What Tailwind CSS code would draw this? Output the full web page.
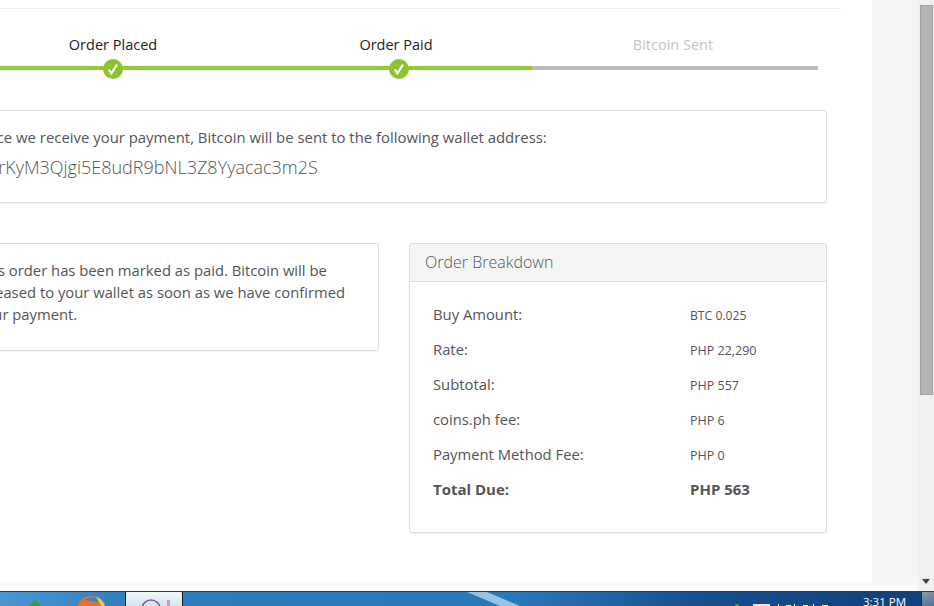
<!DOCTYPE html>
<html><head><meta charset="utf-8"><script src="https://cdn.jsdelivr.net/npm/@tailwindcss/browser@4"></script></head>
<body class="m-0 overflow-hidden">
<div class="w-[934px] h-[606px] flex flex-col overflow-hidden font-['Open_Sans',sans-serif] text-[#555] bg-[#f8f9fb]">
  <div class="h-[591px] flex shrink-0 overflow-hidden">
    <div class="w-[872px] h-[583px] shrink-0 bg-white overflow-hidden">
      <div class="w-[881px] -ml-[39px] h-[583px]">
        <div class="h-[9px] w-[881px] border-b border-[#eeeeee]"></div>
        <div class="relative h-[101px] w-[866px]">
          <div class="absolute left-0 top-[57px] h-[4px] w-[571px] bg-[#94cc2e]"></div>
          <div class="absolute left-[571px] top-[57px] h-[4px] w-[286px] bg-[#bbbbbb]"></div>
          <div class="absolute left-[72px] top-[26px] w-[160px] text-center text-[14.5px] leading-[20px] text-[#222]">Order Placed</div>
          <div class="absolute left-[355px] top-[26px] w-[160px] text-center text-[14.5px] leading-[20px] text-[#222]">Order Paid</div>
          <div class="absolute left-[632px] top-[26px] w-[160px] text-center text-[14.5px] leading-[20px] text-[#c4c4c4]">Bitcoin Sent</div>
          <div class="absolute left-[142px] top-[50px] w-[20px] h-[20px] rounded-full bg-[#8cc332]"><svg width="20" height="20" viewBox="0 0 20 20" fill="none"><path d="M5.8 10.5 L8.4 14.4 L14 5.6" stroke="#fff" stroke-width="2"/></svg></div>
          <div class="absolute left-[428px] top-[50px] w-[20px] h-[20px] rounded-full bg-[#8cc332]"><svg width="20" height="20" viewBox="0 0 20 20" fill="none"><path d="M5.8 10.5 L8.4 14.4 L14 5.6" stroke="#fff" stroke-width="2"/></svg></div>
        </div>
        <div class="w-[866px] h-[93px] border border-[#dddddd] rounded-[3px] pl-[14px] pt-[15px] shadow-[0_1px_1px_rgba(0,0,0,0.05)]">
          <p class="text-[14.9px] leading-[22px] whitespace-nowrap">Once we receive your payment, Bitcoin will be sent to the following wallet address:</p>
          <p class="text-[18px] leading-[26px] mt-[6px] -ml-[8px] font-light whitespace-nowrap">1LbrKyM3Qjgi5E8udR9bNL3Z8Yyacac3m2S</p>
        </div>
        <div class="flex gap-[30px] mt-[40px] w-[866px] items-start">
          <div class="w-[418px] h-[108px] border border-[#dddddd] rounded-[3px] pl-[15px] pr-[19px] pt-[15px] text-[14.8px] leading-[22px] shadow-[0_1px_1px_rgba(0,0,0,0.05)]">This order has been marked as paid. Bitcoin will be released to your wallet as soon as we have confirmed your payment.</div>
          <div class="w-[418px] h-[290px] border border-[#dddddd] rounded-[3px] overflow-hidden shadow-[0_1px_1px_rgba(0,0,0,0.05)]">
            <div class="h-[38px] bg-[#f5f5f5] border-b border-[#dddddd] pl-[15px] text-[16px] font-light leading-[36px]">Order Breakdown</div>
            <div class="pl-[23px] pt-[15px] grid grid-cols-[257px_1fr] auto-rows-[35px] items-center text-[14.8px]">
              <div>Buy Amount:</div><div class="text-[12.2px] pt-[3px]">BTC 0.025</div>
              <div>Rate:</div><div class="text-[12.5px] pt-[3px]">PHP 22,290</div>
              <div>Subtotal:</div><div class="text-[12.5px] pt-[3px]">PHP 557</div>
              <div>coins.ph fee:</div><div class="text-[12.5px] pt-[3px]">PHP 6</div>
              <div>Payment Method Fee:</div><div class="text-[12.5px] pt-[3px]">PHP 0</div>
              <div class="font-bold text-[15px]">Total Due:</div><div class="font-bold text-[15px]">PHP 563</div>
            </div>
          </div>
        </div>
      </div>
    </div>
    <div class="w-[46px] h-[583px] shrink-0 bg-[#f5f5f5]"></div>
    <div class="w-[16px] h-[591px] shrink-0 bg-[#f0f0f0] flex flex-col items-center">
      <div class="mt-[5px] w-[13px] h-[390px] bg-[#b4b4b4] border border-[#a0a0a0]"></div>
      <svg class="mt-auto mb-[7px]" width="8" height="5" viewBox="0 0 8 5"><path d="M0 0h8L4 5z" fill="#444"/></svg>
    </div>
  </div>
  <div class="relative h-[15px] shrink-0 overflow-hidden border-t border-[#1d3f66] bg-[linear-gradient(90deg,#4a97d3,#2f7cbe_15%,#2a78bc_55%,#174f8f_75%,#123f78)]">
    <svg class="absolute left-[460px] top-0" width="70" height="14" viewBox="0 0 70 14"><polygon points="7,0 27,0 60,14 40,14" fill="#a9d0ef" opacity="0.85"/></svg>
    <svg class="absolute left-[24px] top-0" width="22" height="14" viewBox="0 0 22 14"><polygon points="11,8 17,14 5,14" fill="#2f9e3f"/></svg>
    <svg class="absolute left-[76px] top-0" width="30" height="14" viewBox="0 0 30 14"><circle cx="15" cy="18" r="14" fill="#e8731e"/><path d="M8 8 A14 14 0 0 1 28 12 L20 10 Z" fill="#3f7fc4"/><path d="M20 4.5 A14 14 0 0 1 29 14 L25 14 Z" fill="#f2c23c"/></svg>
    <div class="absolute left-[125px] -top-px w-[58px] h-[16px] border-t border-x border-[#1a1a1a] rounded-t-[2px] bg-[linear-gradient(180deg,#f2f8fc,#cfe3f2)]">
      <svg width="58" height="15" viewBox="0 0 58 15" fill="none"><circle cx="25" cy="17" r="9" stroke="#8a5aa8" stroke-width="1.6"/><rect x="41" y="8" width="3" height="7" fill="#e58ad0"/></svg>
    </div>
    <svg class="absolute left-[732px] top-0" width="100" height="14" viewBox="0 0 100 14"><circle cx="5" cy="14" r="2" fill="#4fa84f"/><rect x="21" y="12" width="17" height="2" fill="#f3dfe8"/><rect x="46" y="12" width="1" height="2" fill="#fff"/><rect x="54" y="13" width="5" height="1" fill="#e8eef5"/><rect x="62" y="12" width="1" height="2" fill="#fff"/><rect x="71" y="13" width="5" height="1" fill="#e8eef5"/><rect x="81" y="12" width="1" height="2" fill="#fff"/><rect x="90" y="13" width="6" height="1" fill="#e8eef5"/></svg>
    <div class="absolute left-[863px] top-[2px] text-[11.5px] leading-[16px] text-white whitespace-nowrap">3:31 PM</div>
    <div class="absolute left-[921px] top-0 w-[13px] h-[15px] border-l border-[#123058] bg-[linear-gradient(160deg,#8b98a8,#4f6f96)]"></div>
  </div>
</div>
</body></html>
